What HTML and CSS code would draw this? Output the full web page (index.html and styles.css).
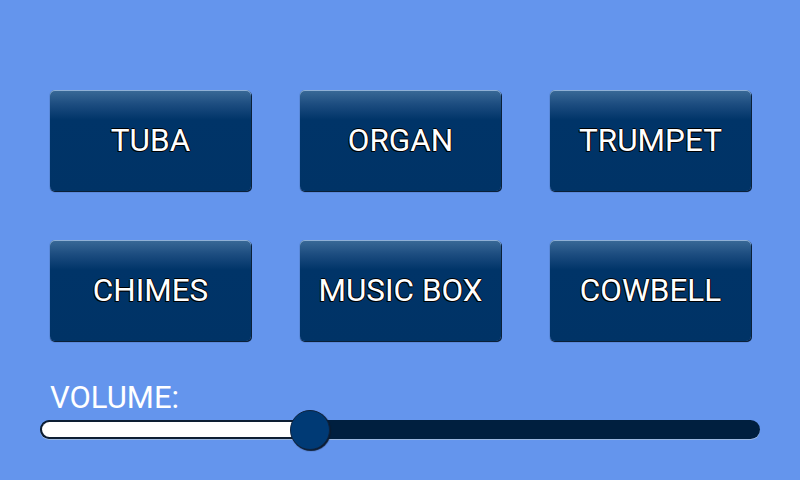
FILE: index.html
```html
<!DOCTYPE html>
<html lang="en">
<head>
<meta charset="utf-8"/>
<title>Sound Board</title>
<meta content="width=device-width, initial-scale=1.0" name="viewport"/>
<link rel="stylesheet" href="styles.css">
</head>
<body>
<div class="board">
  <div class="pads">
    <button class="pad">TUBA</button>
    <button class="pad">ORGAN</button>
    <button class="pad">TRUMPET</button>
    <button class="pad">CHIMES</button>
    <button class="pad">MUSIC BOX</button>
    <button class="pad">COWBELL</button>
  </div>
  <div class="volume">
    <label>VOLUME:</label>
    <div class="slider">
      <div class="track">
        <div class="fill" style="width: 37.5%"></div>
      </div>
      <div class="thumb" style="left: 37.5%"></div>
    </div>
  </div>
</div>
</body>
</html>
```

FILE: styles.css
```css
body {
  margin: 0;
  background: #6495ed;
  font-family: Roboto, 'Liberation Sans', sans-serif;
  color: #fff;
}
.board {
  width: 800px;
  height: 480px;
  overflow: hidden;
}
.pads {
  display: grid;
  grid-template-columns: repeat(3, 201px);
  grid-auto-rows: 101px;
  column-gap: 49px;
  row-gap: 49px;
  padding: 90px 0 0 50px;
}
.pad {
  font-family: inherit;
  font-size: 31.5px;
  color: #fff;
  border: none;
  border-radius: 5px;
  background: linear-gradient(to bottom, #3a6a98 0px, #1d4d80 14px, #003468 30px, #003366 100%);
  box-shadow: inset 0 1px 0 #8fb0d6, 1px 1px 0 #0b2038, 0 1px 1px #0b2038;
  text-shadow: -1px 1px 0 #000, 1px 0 0 #000, 0 -1px 0 #000, 0 1px 0 #000;
  padding: 0;
  cursor: pointer;
}
.volume {
  padding: 45px 40px 0 40px;
}
.volume label {
  display: block;
  font-size: 31px;
  line-height: 24px;
  padding-left: 10px;
}
.slider {
  position: relative;
  height: 40px;
}
.track {
  position: absolute;
  left: 0;
  right: 0;
  top: 10px;
  height: 19px;
  border-radius: 10px;
  background: #001f3f;
  box-shadow: 0 1px 0 #9bb7e0;
  overflow: hidden;
}
.fill {
  height: 100%;
  box-sizing: border-box;
  background: #fff;
  border: 2px solid #0d1e33;
  border-right: none;
  border-radius: 10px 0 0 10px;
}
.thumb {
  position: absolute;
  top: 0;
  width: 40px;
  height: 40px;
  margin-left: -20px;
  box-sizing: border-box;
  border-radius: 50%;
  background: #003a75;
  border: 1px solid #0d2340;
  box-shadow: 1px 1px 1px #0b1a2e;
}
```
